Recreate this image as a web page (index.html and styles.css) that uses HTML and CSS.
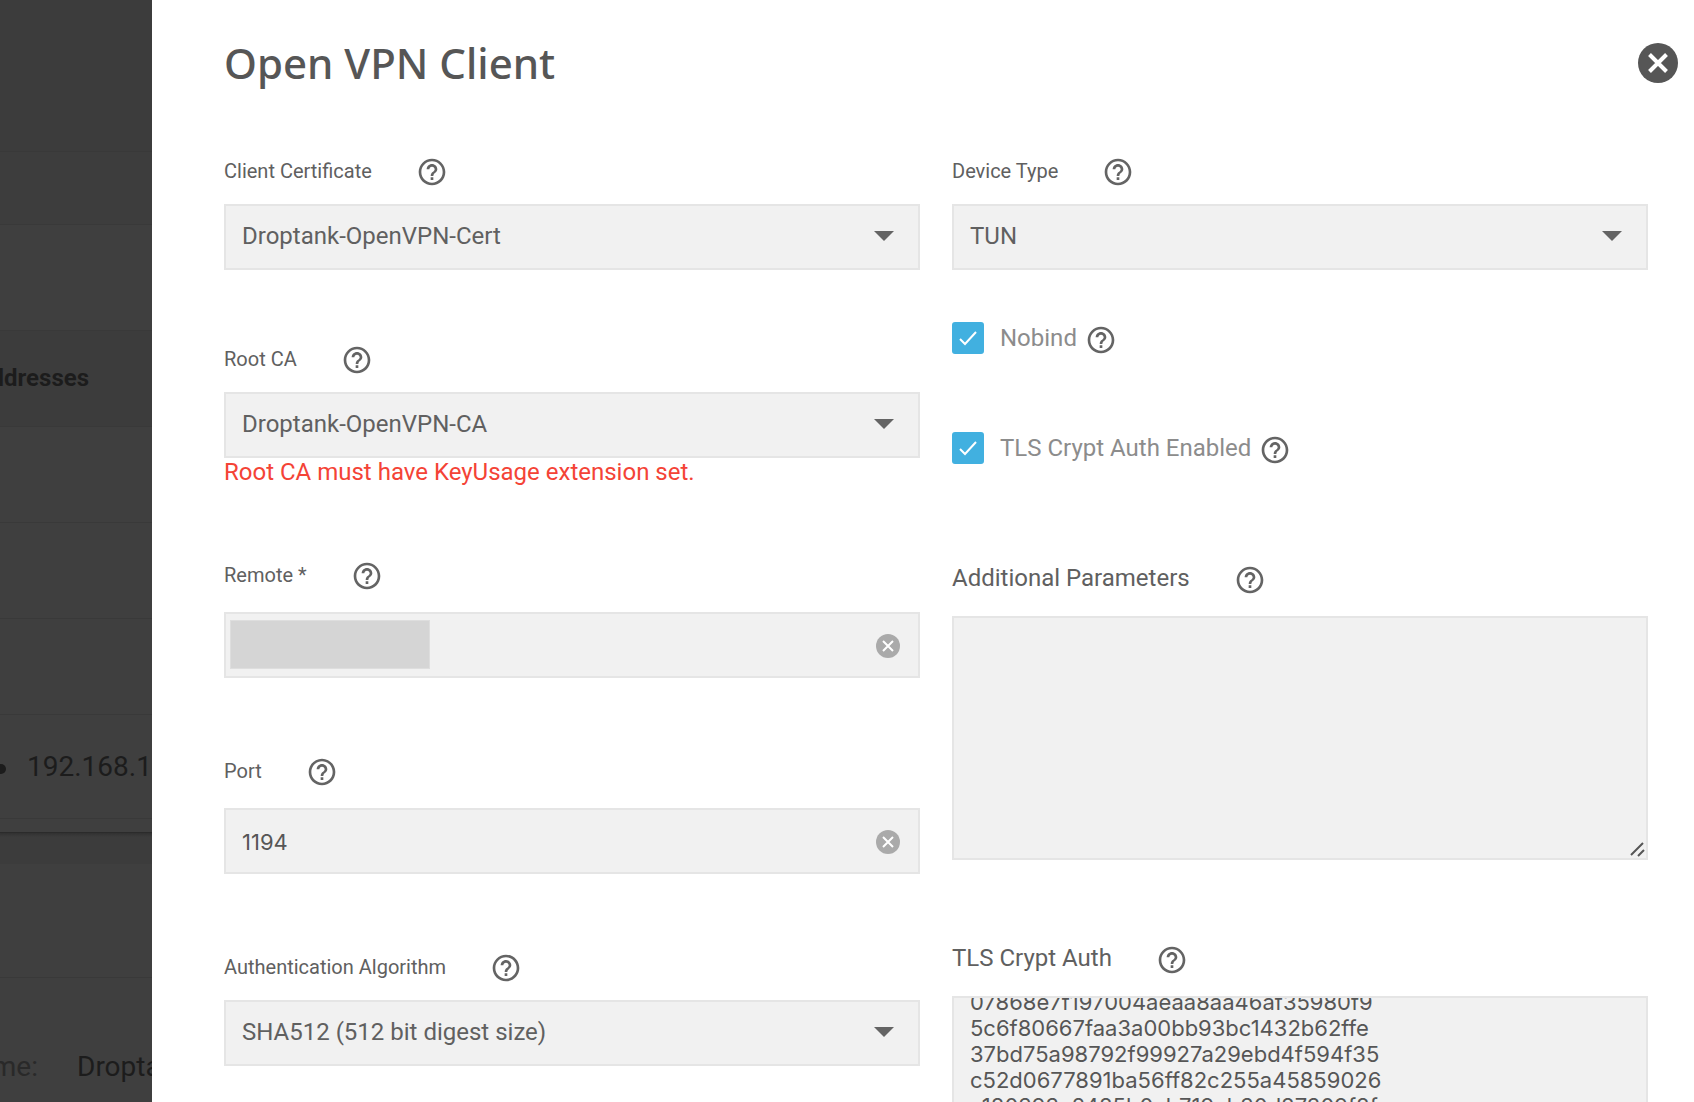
FILE: index.html
```html
<!DOCTYPE html>
<html lang="en">
<head>
    <meta charset="UTF-8">
    <meta name="viewport" content="width=device-width, initial-scale=1.0">
    <title>Open VPN Client</title>
    <link rel="stylesheet" href="styles.css">
</head>
<body>
    <!-- shared icons -->
    <svg class="sprite" aria-hidden="true">
        <symbol id="icon-help" viewBox="0 0 24 24">
            <path d="M11 18h2v-2h-2v2zm1-16C6.48 2 2 6.48 2 12s4.48 10 10 10 10-4.48 10-10S17.52 2 12 2zm0 18c-4.41 0-8-3.59-8-8s3.59-8 8-8 8 3.59 8 8-3.59 8-8 8zm0-14c-2.21 0-4 1.79-4 4h2c0-1.1.9-2 2-2s2 .9 2 2c0 2-3 1.75-3 5h2c0-2.25 3-2.5 3-5 0-2.21-1.79-4-4-4z"/>
        </symbol>
        <symbol id="icon-close" viewBox="0 0 40 40">
            <circle cx="20" cy="20" r="20"/>
            <path class="cross" d="M11.5 11.5l17 17M28.5 11.5l-17 17"/>
        </symbol>
        <symbol id="icon-clear" viewBox="0 0 24 24">
            <circle cx="12" cy="12" r="12"/>
            <path class="cross" d="M7 7l10 10M17 7l-10 10"/>
        </symbol>
        <symbol id="icon-arrow" viewBox="0 0 20 10">
            <path d="M0 0h20l-10 10z"/>
        </symbol>
        <symbol id="icon-grip" viewBox="0 0 16 16">
            <path d="M2 14l12-12M9 15l6-6"/>
        </symbol>
    </svg>

    <div class="layout">
        <aside class="page-behind">
            <div class="row row-toolbar"></div>
            <div class="row row-tabs"></div>
            <div class="row row-filter"></div>
            <div class="row row-head">Addresses</div>
            <div class="row"></div>
            <div class="row"></div>
            <div class="row"></div>
            <div class="row row-address"><span class="dot"></span>192.168.1</div>
            <div class="card-end"></div>
            <div class="card-gap"></div>
            <div class="row row-title"></div>
            <div class="row-name"><span class="name-label">Name:</span><span>Droptank</span></div>
        </aside>

        <main class="drawer">
            <header class="drawer-header">
                <h1>Open VPN Client</h1>
                <button type="button" class="icon-button close" aria-label="Close">
                    <svg class="icon-close"><use href="#icon-close"/></svg>
                </button>
            </header>

            <form class="columns">
                <div class="column">
                    <div class="field">
                        <div class="field-head">
                            <label for="client-cert">Client Certificate</label>
                            <button type="button" class="icon-button" aria-label="Help"><svg class="icon-help"><use href="#icon-help"/></svg></button>
                        </div>
                        <div class="control">
                            <select id="client-cert"><option>Droptank-OpenVPN-Cert</option></select>
                            <svg class="arrow"><use href="#icon-arrow"/></svg>
                        </div>
                    </div>

                    <div class="field">
                        <div class="field-head">
                            <label for="root-ca">Root CA</label>
                            <button type="button" class="icon-button" aria-label="Help"><svg class="icon-help"><use href="#icon-help"/></svg></button>
                        </div>
                        <div class="control">
                            <select id="root-ca"><option>Droptank-OpenVPN-CA</option></select>
                            <svg class="arrow"><use href="#icon-arrow"/></svg>
                        </div>
                        <div class="error-message">Root CA must have KeyUsage extension set.</div>
                    </div>

                    <div class="field field-input">
                        <div class="field-head">
                            <label for="remote">Remote *</label>
                            <button type="button" class="icon-button" aria-label="Help"><svg class="icon-help"><use href="#icon-help"/></svg></button>
                        </div>
                        <div class="control">
                            <input type="text" id="remote">
                            <span class="redacted"></span>
                            <button type="button" class="icon-button clear" aria-label="Clear"><svg class="icon-clear"><use href="#icon-clear"/></svg></button>
                        </div>
                    </div>

                    <div class="field field-input">
                        <div class="field-head">
                            <label for="port">Port</label>
                            <button type="button" class="icon-button" aria-label="Help"><svg class="icon-help"><use href="#icon-help"/></svg></button>
                        </div>
                        <div class="control">
                            <input type="text" id="port" value="1194">
                            <button type="button" class="icon-button clear" aria-label="Clear"><svg class="icon-clear"><use href="#icon-clear"/></svg></button>
                        </div>
                    </div>

                    <div class="field">
                        <div class="field-head">
                            <label for="auth-alg">Authentication Algorithm</label>
                            <button type="button" class="icon-button" aria-label="Help"><svg class="icon-help"><use href="#icon-help"/></svg></button>
                        </div>
                        <div class="control">
                            <select id="auth-alg"><option>SHA512 (512 bit digest size)</option></select>
                            <svg class="arrow"><use href="#icon-arrow"/></svg>
                        </div>
                    </div>
                </div>

                <div class="column">
                    <div class="field field-device">
                        <div class="field-head">
                            <label for="device-type">Device Type</label>
                            <button type="button" class="icon-button" aria-label="Help"><svg class="icon-help"><use href="#icon-help"/></svg></button>
                        </div>
                        <div class="control">
                            <select id="device-type"><option>TUN</option></select>
                            <svg class="arrow"><use href="#icon-arrow"/></svg>
                        </div>
                    </div>

                    <div class="checks">
                        <div class="check">
                            <span class="box">
                                <input type="checkbox" id="nobind" checked>
                                <svg class="tick" viewBox="0 0 32 32"><path d="M8 17l5 5 11-12"/></svg>
                            </span>
                            <label for="nobind">Nobind</label>
                            <button type="button" class="icon-button" aria-label="Help"><svg class="icon-help"><use href="#icon-help"/></svg></button>
                        </div>
                        <div class="check">
                            <span class="box">
                                <input type="checkbox" id="tls-enabled" checked>
                                <svg class="tick" viewBox="0 0 32 32"><path d="M8 17l5 5 11-12"/></svg>
                            </span>
                            <label for="tls-enabled">TLS Crypt Auth Enabled</label>
                            <button type="button" class="icon-button" aria-label="Help"><svg class="icon-help"><use href="#icon-help"/></svg></button>
                        </div>
                    </div>

                    <div class="field field-area">
                        <div class="field-head">
                            <label for="extra-params">Additional Parameters</label>
                            <button type="button" class="icon-button" aria-label="Help"><svg class="icon-help"><use href="#icon-help"/></svg></button>
                        </div>
                        <div class="control">
                            <textarea id="extra-params"></textarea>
                            <svg class="grip"><use href="#icon-grip"/></svg>
                        </div>
                    </div>

                    <div class="field field-area">
                        <div class="field-head">
                            <label for="tls-key">TLS Crypt Auth</label>
                            <button type="button" class="icon-button" aria-label="Help"><svg class="icon-help"><use href="#icon-help"/></svg></button>
                        </div>
                        <div class="control">
                            <textarea id="tls-key" class="key">07868e7f197004aeaa8aa46af35980f9
5c6f80667faa3a00bb93bc1432b62ffe
37bd75a98792f99927a29ebd4f594f35
c52d0677891ba56ff82c255a45859026
c180393c2485b0ab719cb30d87309f8f</textarea>
                        </div>
                    </div>
                </div>
            </form>
        </main>
    </div>

    <script>
        // open the key partly scrolled
        document.getElementById('tls-key').scrollTop = 9;
    </script>
</body>
</html>
```
FILE: styles.css
```css
* {
    box-sizing: border-box;
}
body {
    margin: 0;
    font-family: Roboto, sans-serif;
    font-size: 24px;
    line-height: 28px;
    color: #606060;
    background: #fff;
}
.sprite {
    display: none;
}
.layout {
    display: flex;
    height: 100vh;
    overflow: hidden;
}

/* page behind the drawer */
.page-behind {
    flex: 0 0 152px;
    overflow: hidden;
    background: #3f3f3f;
    color: #1c1c1c;
    font-size: 28px;
    white-space: nowrap;
}
.row {
    height: 96px;
    border-bottom: 1px solid #393939;
}
.row-toolbar {
    height: 152px;
    background: #3c3c3c;
}
.row-tabs {
    height: 73px;
    background: #3d3d3d;
}
.row-filter {
    height: 106px;
}
.row-head {
    display: flex;
    align-items: center;
    justify-content: flex-end;
    padding: 0 63px 2px 0;
    background: #3c3c3c;
    font-size: 24px;
    font-weight: 700;
}
.row-address {
    display: flex;
    align-items: center;
    height: 104px;
}
.dot {
    flex: none;
    width: 10px;
    height: 10px;
    margin: 4px 21px 0 -4px;
    border-radius: 50%;
    background: #1c1c1c;
}
.card-end {
    height: 14px;
    border-bottom: 1px solid #2b2b2b;
}
.card-gap {
    height: 31px;
    background: linear-gradient(#313131, #3c3c3c 4px);
}
.row-title {
    height: 114px;
}
.row-name {
    display: flex;
    align-items: center;
    height: 178px;
}
.name-label {
    flex: none;
    display: flex;
    justify-content: flex-end;
    width: 38px;
    margin-right: 39px;
    color: #292929;
}

/* drawer */
.drawer {
    flex: 1;
    min-width: 0;
    padding: 43px 46px 0 72px;
    overflow-y: auto;
    scrollbar-width: none;
}
.drawer-header {
    display: flex;
    justify-content: space-between;
    margin: 0 -30px 73px 0;
}
h1 {
    margin: 0;
    font-family: "Noto Sans", sans-serif;
    font-size: 42px;
    font-weight: 500;
    line-height: 40px;
    color: #565656;
}
.icon-button {
    flex: none;
    display: block;
    padding: 0;
    border: none;
    background: none;
    color: #646464;
    cursor: pointer;
}
.icon-button svg {
    display: block;
    fill: currentColor;
}
.close {
    color: #565656;
}
.icon-close {
    width: 40px;
    height: 40px;
    stroke-width: 4;
}
.icon-help {
    width: 32px;
    height: 32px;
}
.icon-clear {
    width: 24px;
    height: 24px;
    stroke-width: 2;
}
.cross {
    fill: none;
    stroke: #fff;
}
.columns {
    display: grid;
    grid-template-columns: 1fr 1fr;
    gap: 32px;
}
.field {
    margin-bottom: 74px;
}
.field-input {
    margin-bottom: 78px;
}
.field-device {
    margin-bottom: 52px;
}
.field-area {
    margin-bottom: 84px;
}
.field-head {
    display: flex;
    align-items: center;
    gap: 44px;
    height: 32px;
    margin-bottom: 16px;
}
.field-head label {
    padding-bottom: 2px;
    font-size: 20px;
}
.field-input .field-head,
.field-area .field-head {
    margin-bottom: 20px;
}
.field-area .field-head label {
    padding-bottom: 4px;
    font-size: 24px;
}
.control {
    position: relative;
}
select,
input[type="text"],
textarea {
    display: block;
    width: 100%;
    height: 66px;
    padding: 0 64px 0 16px;
    border: 2px solid #e5e5e5;
    border-radius: 0;
    background: #f1f1f1;
    color: #606060;
    font-family: Roboto, sans-serif;
    font-size: 24px;
    outline: none;
}
select {
    appearance: none;
    padding-bottom: 2px;
}
input[type="text"],
textarea {
    font-family: Inter, sans-serif;
    font-size: 22px;
    color: #565656;
}
input[type="text"] {
    padding-top: 2px;
}
textarea {
    height: 244px;
    line-height: 26px;
    resize: none;
    scrollbar-width: none;
}
.key {
    padding-bottom: 128px;
}
.arrow {
    position: absolute;
    top: 27px;
    right: 26px;
    width: 20px;
    height: 10px;
    fill: #646464;
    pointer-events: none;
}
.clear {
    position: absolute;
    top: 22px;
    right: 20px;
    color: #aaa;
}
.redacted {
    position: absolute;
    top: 8px;
    left: 6px;
    width: 200px;
    height: 49px;
    border: 1px solid #dedede;
    background: #d5d5d5;
}
.grip {
    position: absolute;
    right: 3px;
    bottom: 3px;
    width: 16px;
    height: 16px;
    stroke: #565656;
    stroke-width: 2;
    pointer-events: none;
}
.error-message {
    color: #f44336;
}

/* checkboxes */
.checks {
    display: grid;
    gap: 78px;
    margin-bottom: 100px;
}
.check {
    display: flex;
    height: 32px;
}
.check label {
    margin: 2px 8px 0 16px;
    color: #8c8c8c;
}
.check .icon-button {
    padding-top: 2px;
}
.box {
    position: relative;
    width: 32px;
    height: 32px;
}
.box input {
    appearance: none;
    display: block;
    width: 32px;
    height: 32px;
    margin: 0;
    border-radius: 3px;
    background: #fff;
    border: 2px solid #e5e5e5;
}
.box input:checked {
    border-color: #41b0e0;
    background: #41b0e0;
}
.tick {
    position: absolute;
    top: 0;
    left: 0;
    width: 32px;
    height: 32px;
    fill: none;
    stroke: #fff;
    stroke-width: 2;
    pointer-events: none;
}
```
